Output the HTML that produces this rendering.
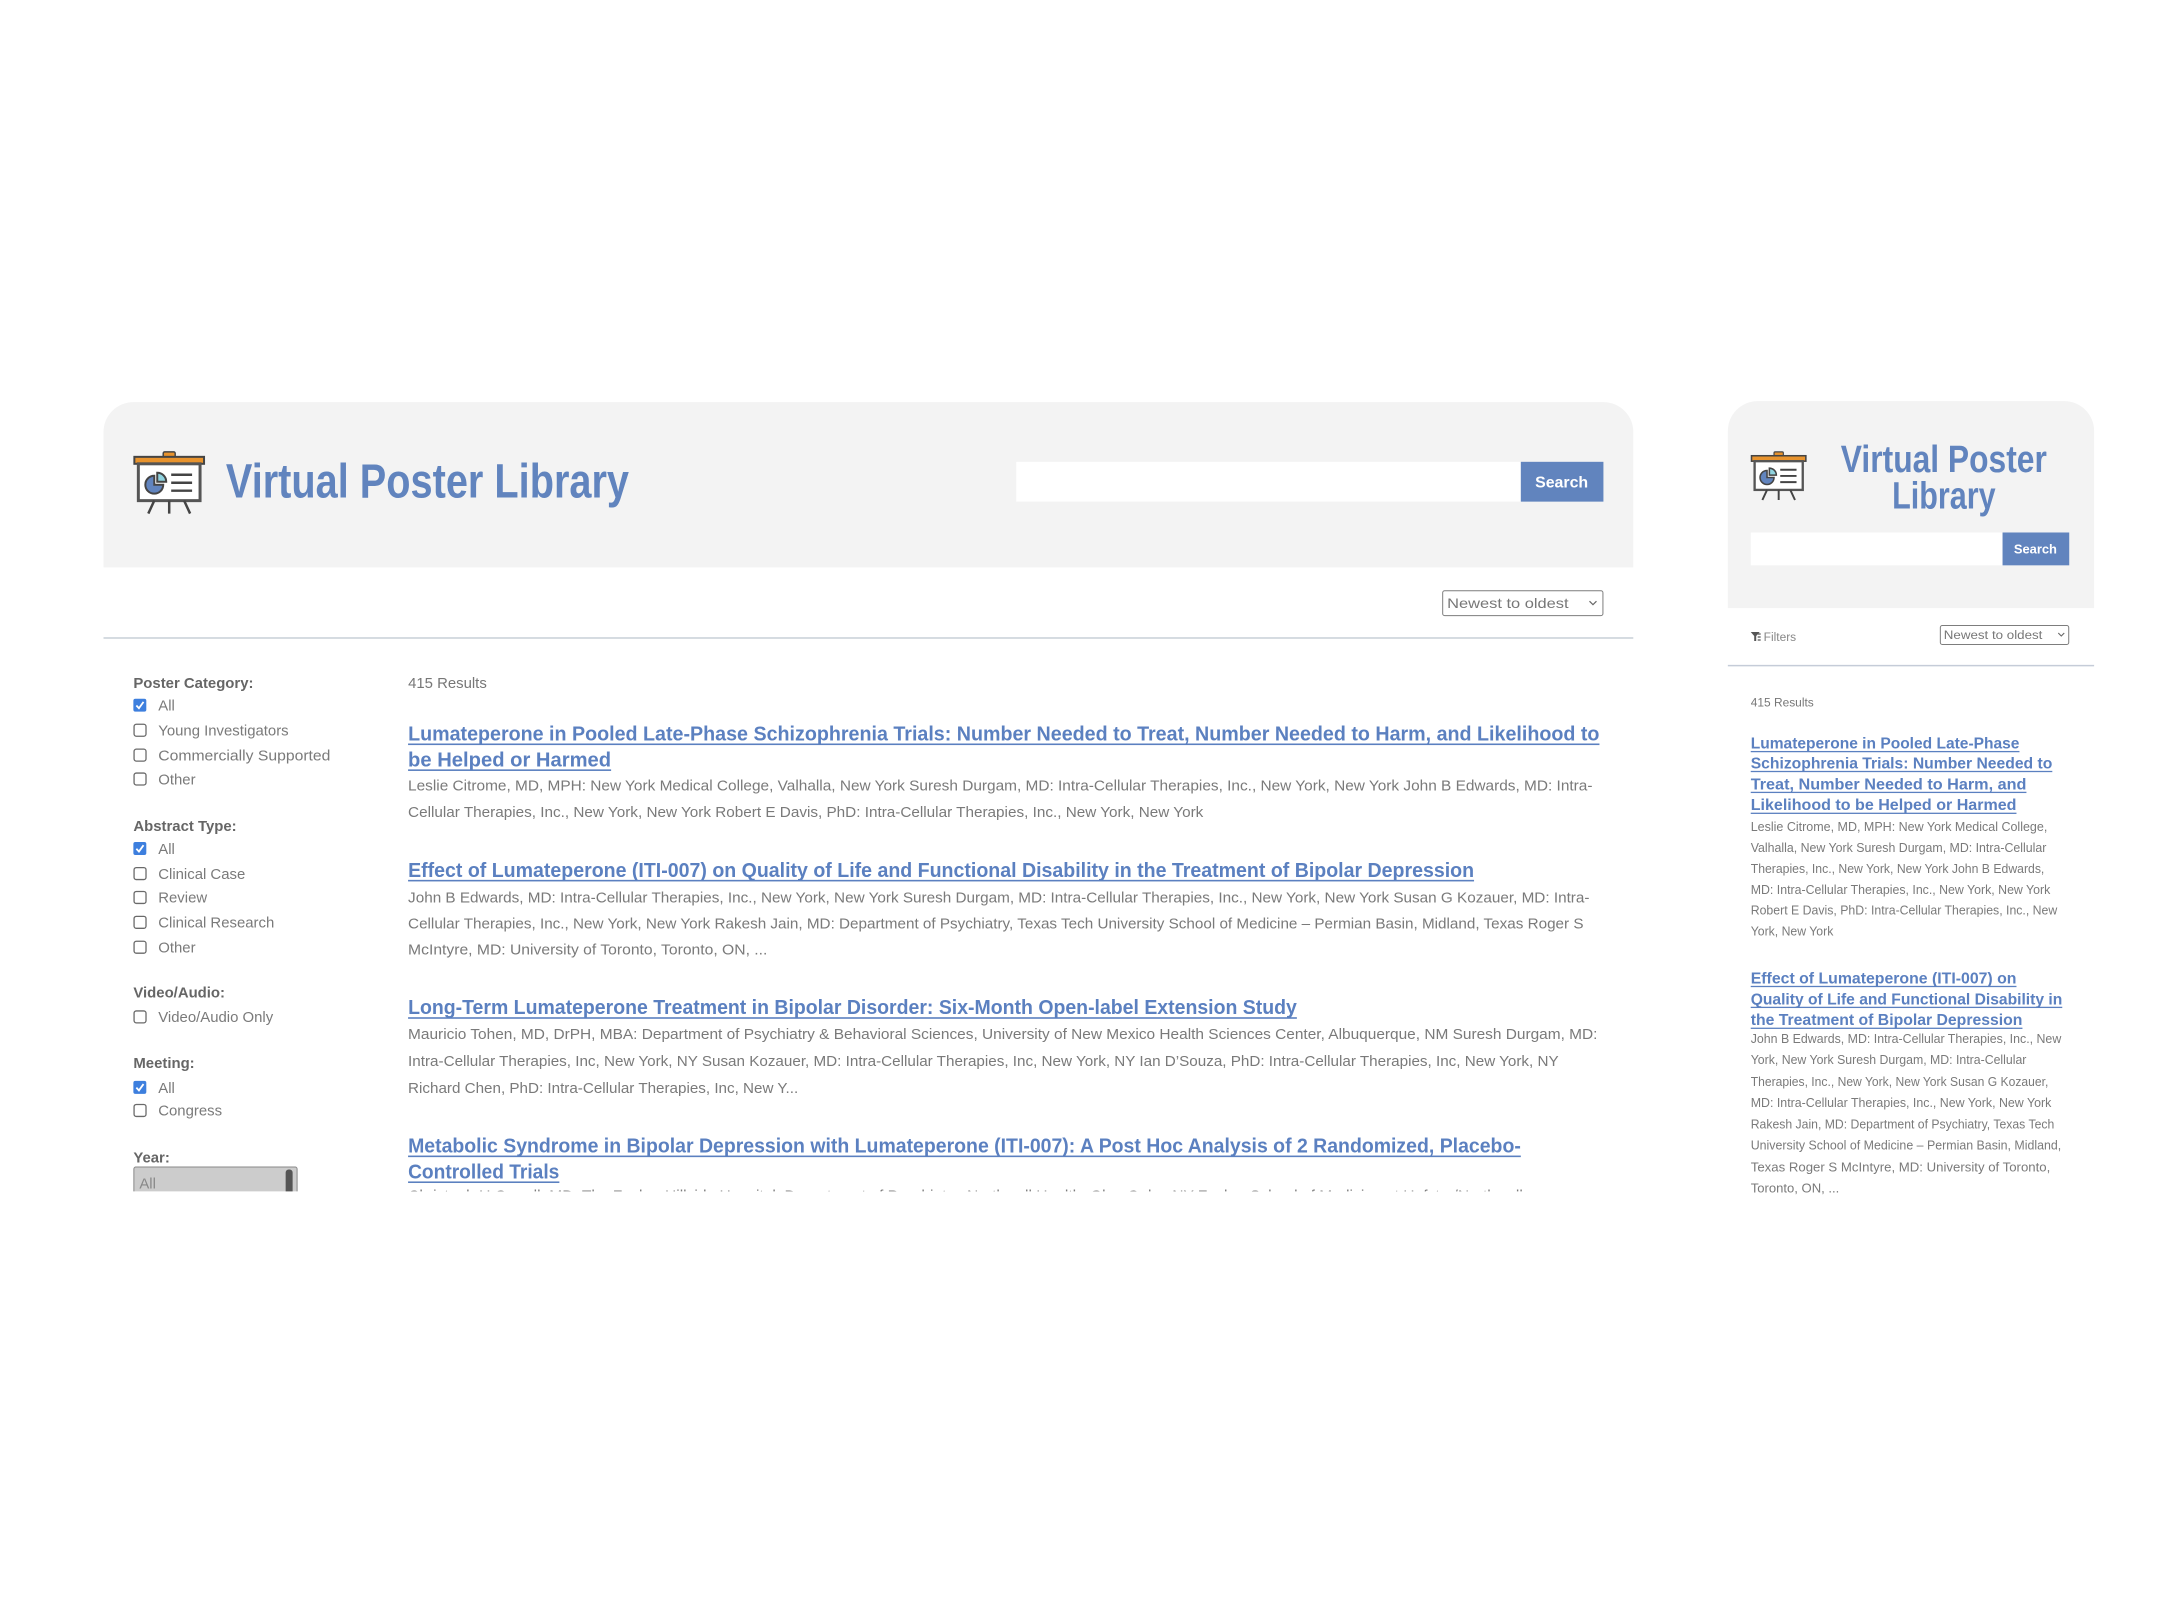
<!DOCTYPE html>
<html><head><meta charset="utf-8"><style>
html,body{margin:0;padding:0;background:#fff;width:2161px;height:1600px;overflow:hidden}
svg{display:block}
text{font-family:"Liberation Sans",sans-serif}
.lk{fill:#5b80c0;font-weight:bold}
.au{fill:#7a7a7a}
.lb{fill:#666;font-weight:bold;font-size:15px}
.it{fill:#7a7a7a;font-size:15px}
</style></head><body>
<svg width="2161" height="1600" viewBox="0 0 2161 1600" xmlns="http://www.w3.org/2000/svg">
<defs>
<g id="easel">
 <rect x="30" y="0" width="12" height="6" rx="1.5" fill="#e8932d" stroke="#444" stroke-width="1.5"/>
 <rect x="1" y="5" width="70" height="7" fill="#e8932d" stroke="#444" stroke-width="2"/>
 <rect x="5" y="12" width="62" height="37" fill="#fff" stroke="#555" stroke-width="3"/>
 <path d="M21 24 A9 9 0 1 0 30 33 L21 33 Z" fill="#6184be" stroke="#444" stroke-width="2"/>
 <path d="M24 21 A9 9 0 0 1 33 30 L24 30 Z" fill="#8fd3df" stroke="#444" stroke-width="2"/>
 <path d="M38 23H59M38 31H59M38 39H59" stroke="#444" stroke-width="2.5"/>
 <path d="M21 49L15 62M36 49V62M51 49L57 62" stroke="#444" stroke-width="2.5"/>
</g>
<g id="cbon"><rect x="0" y="0" width="13" height="13" rx="2" fill="#3d7fde"/><path d="M3 6.8L5.6 9.6L10.2 3.2" stroke="#fff" stroke-width="1.8" fill="none"/></g>
<g id="cboff"><rect x="0.7" y="0.7" width="12" height="12" rx="2.2" fill="#fff" stroke="#6a6a6a" stroke-width="1.3"/></g>
<clipPath id="mainclip"><rect x="100" y="642" width="1560" height="555"/></clipPath>
<clipPath id="rclip"><rect x="1736" y="670" width="380" height="530"/></clipPath>
</defs>
<g transform="scale(0.9953)">
<!-- MAIN CARD -->
<path d="M104 570 V434 A30 30 0 0 1 134 404 H1611 A30 30 0 0 1 1641 434 V570 Z" fill="#f3f3f3"/>
<use href="#easel" transform="translate(134,454)"/>
<text x="227" y="500" font-size="48" font-weight="bold" fill="#6184be" textLength="405" lengthAdjust="spacingAndGlyphs">Virtual Poster Library</text>
<rect x="1021" y="464" width="507" height="40" fill="#fff"/>
<rect x="1528" y="464" width="83" height="40" fill="#6184be"/>
<text x="1569" y="490" font-size="16" font-weight="bold" fill="#fff" text-anchor="middle">Search</text>
<rect x="1449.5" y="593.5" width="161" height="25" rx="2" fill="#fff" stroke="#7d7d7d"/>
<text x="1454" y="611" font-size="14" fill="#777" textLength="122" lengthAdjust="spacingAndGlyphs">Newest to oldest</text>
<path d="M1597 604l3.5 3.5 3.5-3.5" stroke="#666" stroke-width="1.2" fill="none"/>
<rect x="104" y="640" width="1537" height="2" fill="#d5dbe1"/>

<g clip-path="url(#mainclip)">
<text class="lb" x="134" y="691">Poster Category:</text>
<use href="#cbon" x="134" y="702"/><text class="it" x="159" y="714">All</text>
<use href="#cboff" x="134" y="727"/><text class="it" x="159" y="739">Young Investigators</text>
<use href="#cboff" x="134" y="752"/><text class="it" x="159" y="764" textLength="173" lengthAdjust="spacingAndGlyphs">Commercially Supported</text>
<use href="#cboff" x="134" y="776"/><text class="it" x="159" y="788">Other</text>
<text class="lb" x="134" y="835">Abstract Type:</text>
<use href="#cbon" x="134" y="846"/><text class="it" x="159" y="858">All</text>
<use href="#cboff" x="134" y="871"/><text class="it" x="159" y="883">Clinical Case</text>
<use href="#cboff" x="134" y="895"/><text class="it" x="159" y="907">Review</text>
<use href="#cboff" x="134" y="920"/><text class="it" x="159" y="932">Clinical Research</text>
<use href="#cboff" x="134" y="945"/><text class="it" x="159" y="957">Other</text>
<text class="lb" x="134" y="1002">Video/Audio:</text>
<use href="#cboff" x="134" y="1015"/><text class="it" x="159" y="1027">Video/Audio Only</text>
<text class="lb" x="134" y="1073">Meeting:</text>
<use href="#cbon" x="134" y="1086"/><text class="it" x="159" y="1098">All</text>
<use href="#cboff" x="134" y="1109"/><text class="it" x="159" y="1121">Congress</text>
<text class="lb" x="134" y="1168">Year:</text>
<rect x="134.5" y="1172.5" width="164" height="40" rx="2" fill="#cccccc" stroke="#888"/>
<text x="140" y="1194" font-size="15" fill="#888">All</text>
<rect x="287" y="1175" width="7" height="30" rx="3" fill="#555"/>

<text x="410" y="691" font-size="15" fill="#777">415 Results</text>

<text class="lk" x="410" y="744" font-size="20" textLength="1197" lengthAdjust="spacingAndGlyphs">Lumateperone in Pooled Late-Phase Schizophrenia Trials: Number Needed to Treat, Number Needed to Harm, and Likelihood to</text>
<rect x="410" y="747" width="1197" height="1.6" fill="#5b80c0"/>
<text class="lk" x="410" y="770" font-size="20" textLength="204" lengthAdjust="spacingAndGlyphs">be Helped or Harmed</text>
<rect x="410" y="773" width="204" height="1.6" fill="#5b80c0"/>
<text class="au" x="410" y="794" font-size="15" textLength="1190" lengthAdjust="spacingAndGlyphs">Leslie Citrome, MD, MPH: New York Medical College, Valhalla, New York Suresh Durgam, MD: Intra-Cellular Therapies, Inc., New York, New York John B Edwards, MD: Intra-</text>
<text class="au" x="410" y="821" font-size="15" textLength="799" lengthAdjust="spacingAndGlyphs">Cellular Therapies, Inc., New York, New York Robert E Davis, PhD: Intra-Cellular Therapies, Inc., New York, New York</text>

<text class="lk" x="410" y="881" font-size="20" textLength="1071" lengthAdjust="spacingAndGlyphs">Effect of Lumateperone (ITI-007) on Quality of Life and Functional Disability in the Treatment of Bipolar Depression</text>
<rect x="410" y="884" width="1071" height="1.6" fill="#5b80c0"/>
<text class="au" x="410" y="907" font-size="15" textLength="1187" lengthAdjust="spacingAndGlyphs">John B Edwards, MD: Intra-Cellular Therapies, Inc., New York, New York Suresh Durgam, MD: Intra-Cellular Therapies, Inc., New York, New York Susan G Kozauer, MD: Intra-</text>
<text class="au" x="410" y="933" font-size="15" textLength="1181" lengthAdjust="spacingAndGlyphs">Cellular Therapies, Inc., New York, New York Rakesh Jain, MD: Department of Psychiatry, Texas Tech University School of Medicine – Permian Basin, Midland, Texas Roger S</text>
<text class="au" x="410" y="959" font-size="15" textLength="361" lengthAdjust="spacingAndGlyphs">McIntyre, MD: University of Toronto, Toronto, ON, ...</text>

<text class="lk" x="410" y="1019" font-size="20" textLength="893" lengthAdjust="spacingAndGlyphs">Long-Term Lumateperone Treatment in Bipolar Disorder: Six-Month Open-label Extension Study</text>
<rect x="410" y="1022" width="893" height="1.6" fill="#5b80c0"/>
<text class="au" x="410" y="1044" font-size="15" textLength="1195" lengthAdjust="spacingAndGlyphs">Mauricio Tohen, MD, DrPH, MBA: Department of Psychiatry &amp; Behavioral Sciences, University of New Mexico Health Sciences Center, Albuquerque, NM Suresh Durgam, MD:</text>
<text class="au" x="410" y="1071" font-size="15" textLength="1156" lengthAdjust="spacingAndGlyphs">Intra-Cellular Therapies, Inc, New York, NY Susan Kozauer, MD: Intra-Cellular Therapies, Inc, New York, NY Ian D’Souza, PhD: Intra-Cellular Therapies, Inc, New York, NY</text>
<text class="au" x="410" y="1098" font-size="15" textLength="392" lengthAdjust="spacingAndGlyphs">Richard Chen, PhD: Intra-Cellular Therapies, Inc, New Y...</text>

<text class="lk" x="410" y="1158" font-size="20" textLength="1118" lengthAdjust="spacingAndGlyphs">Metabolic Syndrome in Bipolar Depression with Lumateperone (ITI-007): A Post Hoc Analysis of 2 Randomized, Placebo-</text>
<rect x="410" y="1161" width="1118" height="1.6" fill="#5b80c0"/>
<text class="lk" x="410" y="1184" font-size="20" textLength="152" lengthAdjust="spacingAndGlyphs">Controlled Trials</text>
<rect x="410" y="1187" width="152" height="1.6" fill="#5b80c0"/>
<text class="au" x="410" y="1206" font-size="15" textLength="1120" lengthAdjust="spacingAndGlyphs">Christoph U Correll, MD: The Zucker Hillside Hospital, Department of Psychiatry, Northwell Health, Glen Oaks, NY Zucker School of Medicine at Hofstra/Northwell</text>
</g>

<!-- RIGHT CARD -->
<path d="M1736 611 V433 A30 30 0 0 1 1766 403 H2074 A30 30 0 0 1 2104 433 V611 Z" fill="#f3f3f3"/>
<use href="#easel" transform="translate(1759,454) scale(0.78)"/>
<text x="1953" y="474" font-size="38" font-weight="bold" fill="#6184be" text-anchor="middle" textLength="207" lengthAdjust="spacingAndGlyphs">Virtual Poster</text>
<text x="1953" y="511" font-size="38" font-weight="bold" fill="#6184be" text-anchor="middle" textLength="104" lengthAdjust="spacingAndGlyphs">Library</text>
<rect x="1759" y="535" width="253" height="33" fill="#fff"/>
<rect x="2012" y="535" width="67" height="33" fill="#6184be"/>
<text x="2045" y="556" font-size="13" font-weight="bold" fill="#fff" text-anchor="middle">Search</text>
<path d="M1759 635h9l-3.5 4v5h-2v-5z" fill="#555"/>
<path d="M1766 637h3M1766 640h3M1766 643h3" stroke="#555" stroke-width="1.3"/>
<text x="1772" y="644" font-size="12" fill="#888">Filters</text>
<rect x="1949.5" y="628.5" width="129" height="19" rx="2" fill="#fff" stroke="#7d7d7d"/>
<text x="1953" y="642" font-size="12" fill="#777" textLength="99" lengthAdjust="spacingAndGlyphs">Newest to oldest</text>
<path d="M2068 636l3 3 3-3" stroke="#666" stroke-width="1.1" fill="none"/>
<rect x="1736" y="668" width="368" height="1.5" fill="#c5ccd8"/>

<g clip-path="url(#rclip)">
<text x="1759" y="710" font-size="12" fill="#777">415 Results</text>
<g font-size="16">
<text class="lk" x="1759" y="752" textLength="270" lengthAdjust="spacingAndGlyphs">Lumateperone in Pooled Late-Phase</text>
<text class="lk" x="1759" y="772" textLength="303" lengthAdjust="spacingAndGlyphs">Schizophrenia Trials: Number Needed to</text>
<text class="lk" x="1759" y="793" textLength="277" lengthAdjust="spacingAndGlyphs">Treat, Number Needed to Harm, and</text>
<text class="lk" x="1759" y="814" textLength="267" lengthAdjust="spacingAndGlyphs">Likelihood to be Helped or Harmed</text>
</g>
<rect x="1759" y="754.5" width="270" height="1.3" fill="#5b80c0"/>
<rect x="1759" y="774.5" width="303" height="1.3" fill="#5b80c0"/>
<rect x="1759" y="795.5" width="277" height="1.3" fill="#5b80c0"/>
<rect x="1759" y="816.5" width="267" height="1.3" fill="#5b80c0"/>
<g font-size="12.5">
<text class="au" x="1759" y="835" textLength="298" lengthAdjust="spacingAndGlyphs">Leslie Citrome, MD, MPH: New York Medical College,</text>
<text class="au" x="1759" y="856" textLength="297" lengthAdjust="spacingAndGlyphs">Valhalla, New York Suresh Durgam, MD: Intra-Cellular</text>
<text class="au" x="1759" y="877" textLength="295" lengthAdjust="spacingAndGlyphs">Therapies, Inc., New York, New York John B Edwards,</text>
<text class="au" x="1759" y="898" textLength="301" lengthAdjust="spacingAndGlyphs">MD: Intra-Cellular Therapies, Inc., New York, New York</text>
<text class="au" x="1759" y="919" textLength="308" lengthAdjust="spacingAndGlyphs">Robert E Davis, PhD: Intra-Cellular Therapies, Inc., New</text>
<text class="au" x="1759" y="940" textLength="83" lengthAdjust="spacingAndGlyphs">York, New York</text>
</g>
<g font-size="16">
<text class="lk" x="1759" y="988" textLength="267" lengthAdjust="spacingAndGlyphs">Effect of Lumateperone (ITI-007) on</text>
<text class="lk" x="1759" y="1009" textLength="313" lengthAdjust="spacingAndGlyphs">Quality of Life and Functional Disability in</text>
<text class="lk" x="1759" y="1030" textLength="273" lengthAdjust="spacingAndGlyphs">the Treatment of Bipolar Depression</text>
</g>
<rect x="1759" y="990.5" width="267" height="1.3" fill="#5b80c0"/>
<rect x="1759" y="1011.5" width="313" height="1.3" fill="#5b80c0"/>
<rect x="1759" y="1032.5" width="273" height="1.3" fill="#5b80c0"/>
<g font-size="12.5">
<text class="au" x="1759" y="1048" textLength="312" lengthAdjust="spacingAndGlyphs">John B Edwards, MD: Intra-Cellular Therapies, Inc., New</text>
<text class="au" x="1759" y="1069" textLength="277" lengthAdjust="spacingAndGlyphs">York, New York Suresh Durgam, MD: Intra-Cellular</text>
<text class="au" x="1759" y="1091" textLength="299" lengthAdjust="spacingAndGlyphs">Therapies, Inc., New York, New York Susan G Kozauer,</text>
<text class="au" x="1759" y="1112" textLength="302" lengthAdjust="spacingAndGlyphs">MD: Intra-Cellular Therapies, Inc., New York, New York</text>
<text class="au" x="1759" y="1134" textLength="305" lengthAdjust="spacingAndGlyphs">Rakesh Jain, MD: Department of Psychiatry, Texas Tech</text>
<text class="au" x="1759" y="1155" textLength="312" lengthAdjust="spacingAndGlyphs">University School of Medicine – Permian Basin, Midland,</text>
<text class="au" x="1759" y="1177" textLength="301" lengthAdjust="spacingAndGlyphs">Texas Roger S McIntyre, MD: University of Toronto,</text>
<text class="au" x="1759" y="1198" textLength="89" lengthAdjust="spacingAndGlyphs">Toronto, ON, ...</text>
</g>
</g>
</g>
</svg>
</body></html>
